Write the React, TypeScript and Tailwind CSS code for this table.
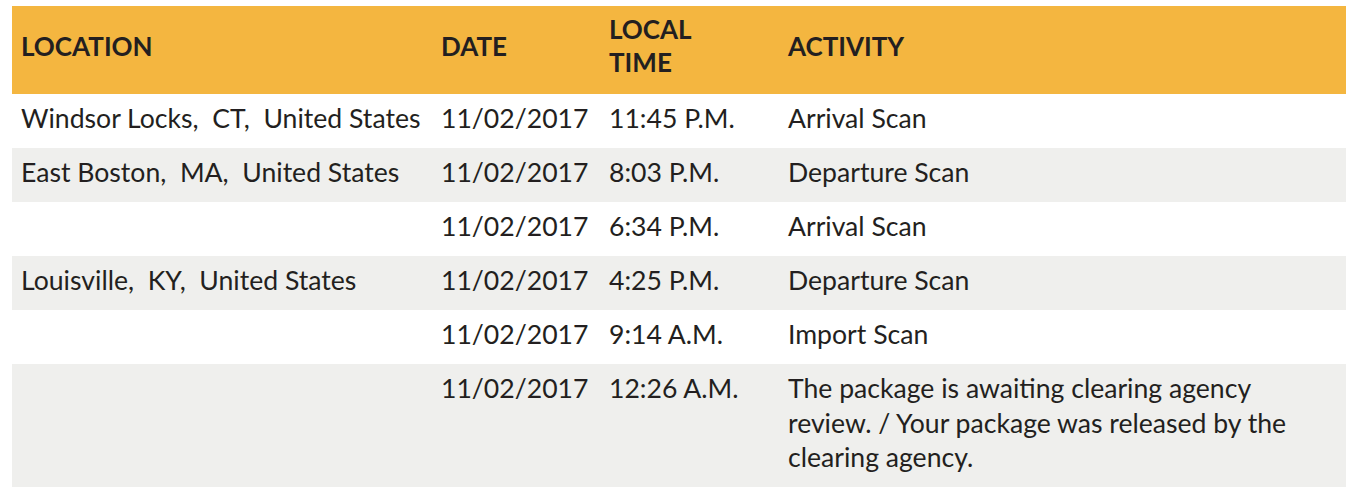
const rows = [
  { location: 'Windsor Locks,\u00a0 CT,\u00a0 United States', date: '11/02/2017', time: '11:45 P.M.', activity: 'Arrival Scan' },
  { location: 'East Boston,\u00a0 MA,\u00a0 United States', date: '11/02/2017', time: '8:03 P.M.', activity: 'Departure Scan' },
  { location: '', date: '11/02/2017', time: '6:34 P.M.', activity: 'Arrival Scan' },
  { location: 'Louisville,\u00a0 KY,\u00a0 United States', date: '11/02/2017', time: '4:25 P.M.', activity: 'Departure Scan' },
  { location: '', date: '11/02/2017', time: '9:14 A.M.', activity: 'Import Scan' },
  {
    location: '',
    date: '11/02/2017',
    time: '12:26 A.M.',
    activity: 'The package is awaiting clearing agency review. / Your package was released by the clearing agency.',
  },
];

export default function App() {
  return (
    <div className="min-h-screen bg-white pt-[6px] pl-[12px] font-['Lato',sans-serif] text-[#231f20]">
      <table className="w-full table-fixed border-collapse text-left">
        <colgroup>
          <col className="w-[420px]" />
          <col className="w-[168px]" />
          <col className="w-[179px]" />
          <col />
        </colgroup>
        <thead>
          <tr className="h-[88px] bg-[#f4b640] text-[26px] font-bold uppercase leading-[33px]">
            <th className="pl-[9px] pr-[10px] pb-[8px] align-middle">Location</th>
            <th className="pl-[9px] pr-[10px] pb-[8px] align-middle">Date</th>
            <th className="pl-[9px] pr-[10px] pb-[8px] align-middle">
              Local
              <br />
              Time
            </th>
            <th className="pl-[9px] pr-[10px] pb-[8px] align-middle">Activity</th>
          </tr>
        </thead>
        <tbody className="text-[26.6px] leading-[34.5px]">
          {rows.map((r, i) => (
            <tr key={i} className={i % 2 === 0 ? 'bg-white' : 'bg-[#efefed]'}>
              <td className="pl-[9px] pr-[10px] pt-[7px] pb-[12.5px] align-top">{r.location}</td>
              <td className="pl-[9px] pr-[10px] pt-[7px] pb-[12.5px] align-top">{r.date}</td>
              <td className="pl-[9px] pr-[10px] pt-[7px] pb-[12.5px] align-top">{r.time}</td>
              <td className="pl-[9px] pr-[30px] pt-[7px] pb-[12.5px] align-top">{r.activity}</td>
            </tr>
          ))}
        </tbody>
      </table>
    </div>
  );
}
